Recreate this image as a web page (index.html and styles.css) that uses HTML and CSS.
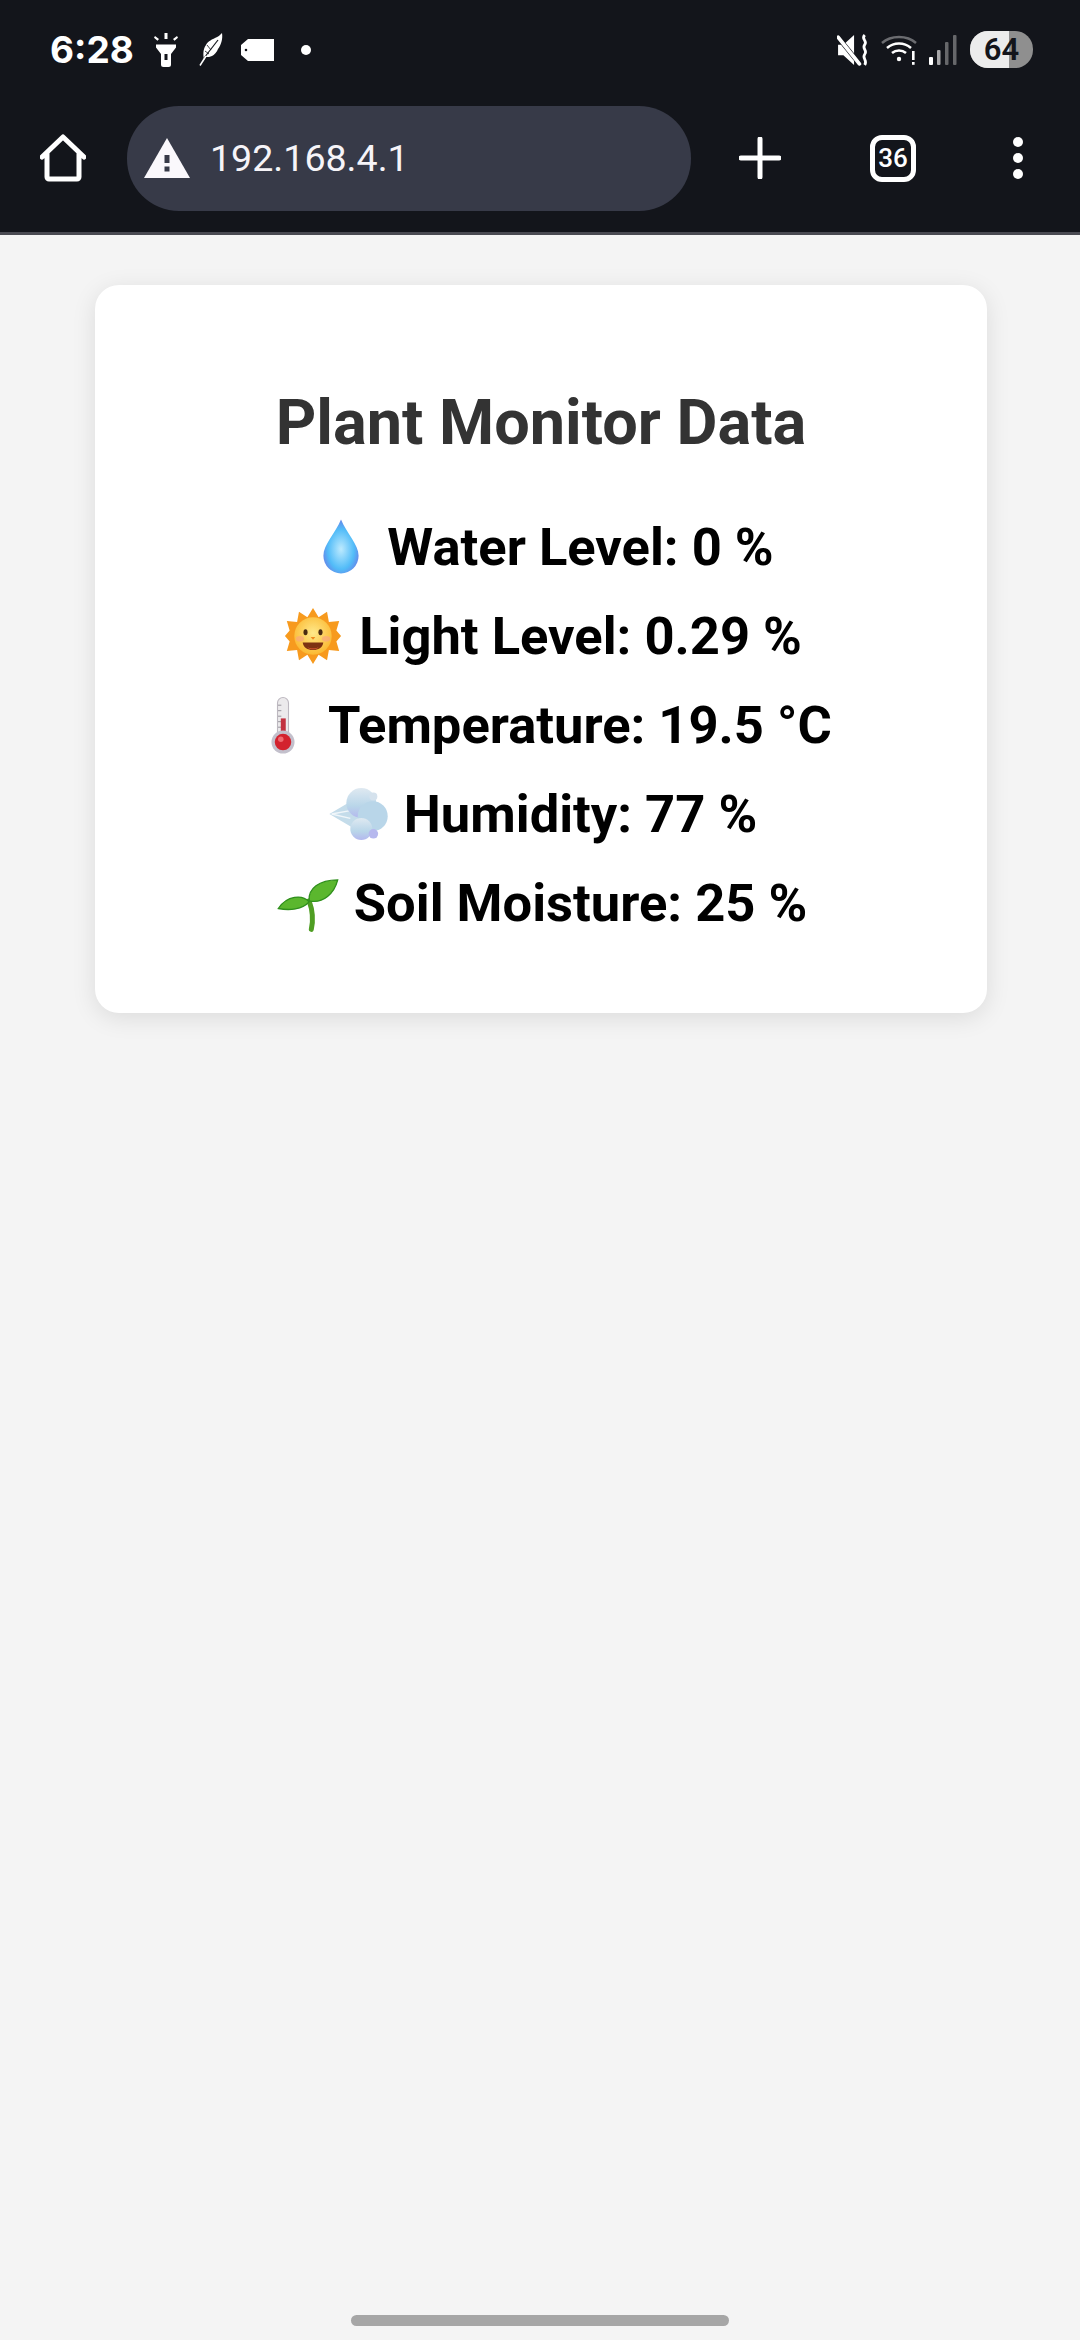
FILE: index.html
```html
<!DOCTYPE html>
<html lang="en">

<head>
  <meta charset="UTF-8">
  <title>Plant Monitor Data</title>
  <link rel="stylesheet" href="styles.css">
</head>

<body>
  <header class="chrome">
    <div class="status-bar">
      <div class="status-left">
        <span class="clock">6:28</span>
        <svg class="st-icon torch" viewBox="0 0 26 34" width="26" height="34">
          <rect x="11.500" y="0" width="3" height="6" fill="#fff" />
          <path d="M2 3l4 3-1.500 1.800-3.500-3zM24 3l-4 3 1.500 1.800 3.500-3z" fill="#fff" />
          <path d="M3 11.500h20v3l-5 6.500v10.500a2.500 2.500 0 0 1-2.500 2.500h-5a2.500 2.500 0 0 1-2.500-2.500v-10.500l-5-6.500z" fill="#fff" />
          <rect x="11.500" y="21" width="3" height="6" fill="#13151b" />
        </svg>
        <svg class="st-icon feather" viewBox="0 0 24 33" width="24" height="33">
          <path d="M23 0c1 6-1 12-4 16-1 3-4 6-6 7-2 1-4 1-6 1l-2 3c-1-6-1-11 2-15 2-4 7-6 9-7 3-1 5-3 7-5z" fill="#fff" />
          <path d="M19 7L5 25" stroke="#13151b" stroke-width="1.200" />
          <path d="M8 12l4 5M6 18l4 3" stroke="#13151b" stroke-width="0.800" />
          <path d="M7 23L1 32.500" stroke="#fff" stroke-width="1.500" />
        </svg>
        <svg class="st-icon tag" viewBox="0 0 33 22" width="33" height="22">
          <path d="M7 0h26v22H7l-7-6V6zM5 9.700a1.300 1.300 0 1 0 0 2.600 1.300 1.300 0 0 0 0-2.600z" fill="#fff" fill-rule="evenodd" />
        </svg>
        <span class="dot"></span>
      </div>
      <div class="status-right">
        <svg class="st-icon mute" viewBox="0 0 30 30" width="32" height="32">
          <path d="M1 10h5l10-9v28L6 20H1z" fill="#fff" />
          <path d="M1 3l20 25" stroke="#13151b" stroke-width="4.500" />
          <path d="M1 3l20 25" stroke="#fff" stroke-width="3.500" stroke-linecap="round" />
          <path d="M26 1c-4 4 3 5 0 9s3 5 0 9 3 5 0 10" fill="none" stroke="#fff" stroke-width="2.600" />
        </svg>
        <svg class="st-icon wifi" viewBox="0 0 36 30" width="36" height="30">
          <path d="M1 8c9-8 25-8 34 0" fill="none" stroke="#6b6c70" stroke-width="2.500" />
          <path d="M6 13c7-6 17-6 24 0" fill="none" stroke="#fff" stroke-width="2.500" />
          <path d="M11 18c4-3.500 10-3.500 14 0" fill="none" stroke="#fff" stroke-width="2.500" />
          <circle cx="18" cy="24" r="2.200" fill="#fff" />
          <rect x="31" y="16" width="2.600" height="9" fill="#fff" />
          <rect x="31" y="27" width="2.600" height="2.800" fill="#fff" />
        </svg>
        <svg class="st-icon signal" viewBox="0 0 28 30" width="28" height="30">
          <rect x="0" y="22" width="4" height="8" rx="1" fill="#fff" />
          <rect x="8" y="15" width="3.500" height="15" rx="1" fill="#a8a8aa" />
          <rect x="16" y="7" width="3.500" height="23" rx="1" fill="#66676a" />
          <rect x="24" y="0" width="3.500" height="30" rx="1" fill="#66676a" />
        </svg>
        <div class="battery"><span class="battery-fill"></span><span class="battery-num">64</span></div>
      </div>
    </div>
    <div class="toolbar">
      <svg class="home" viewBox="0 0 46 48" width="46" height="48">
        <path d="M2 23L23 3l21 20M7 19v24a2 2 0 0 0 2 2h28a2 2 0 0 0 2-2V19" fill="none" stroke="#fff" stroke-width="5" stroke-linecap="round" stroke-linejoin="round" />
      </svg>
      <div class="address">
        <svg viewBox="0 0 46 40" width="46" height="40">
          <path d="M23 0l23 40H0z" fill="#faf8fc" />
          <rect x="20.500" y="17" width="5" height="8" fill="#373a48" />
          <rect x="20.500" y="28.500" width="5" height="5" fill="#373a48" />
        </svg>
        <span class="url">192.168.4.1</span>
      </div>
      <svg class="plus" viewBox="0 0 42 42" width="42" height="42">
        <path d="M21 2v38M2 21h38" stroke="#fff" stroke-width="5" stroke-linecap="round" />
      </svg>
      <div class="tabs">36</div>
      <div class="menu"><span></span><span></span><span></span></div>
    </div>
  </header>

  <main class="page">
    <section class="card">
      <h1>Plant Monitor Data</h1>
      <p><svg class="emoji" viewBox="0 0 60 60">
          <defs>
            <radialGradient id="dropFill" cx="0.5" cy="0.55" r="0.62">
              <stop offset="0" stop-color="#bdeafe" />
              <stop offset="0.6" stop-color="#52bcf8" />
              <stop offset="1" stop-color="#6d6ee2" />
            </radialGradient>
          </defs>
          <path d="M30 5c5 12 16 23 16 33a16 16 0 0 1-32 0c0-10 11-21 16-33z" fill="url(#dropFill)" />
        </svg> Water Level: 0 %</p>
      <p><svg class="emoji" viewBox="0 0 60 60">
          <defs>
            <radialGradient id="sunFill" cx="0.5" cy="0.42" r="0.6">
              <stop offset="0" stop-color="#ffe98a" />
              <stop offset="1" stop-color="#fbb72e" />
            </radialGradient>
          </defs>
          <g transform="translate(4.500 4.500) scale(0.85)">
            <path d="M30 0l6 10 9-6 2 11 11-1-3 10 5 6-5 6 3 10-11-1-2 11-9-6-6 10-6-10-9 6-2-11-11 1 3-10-5-6 5-6-3-10 11 1 2-11 9 6z" fill="#f79a1e" />
            <circle cx="30" cy="30" r="20" fill="url(#sunFill)" />
            <ellipse cx="16" cy="33" rx="4.500" ry="3" fill="#f9a77d" opacity="0.7" />
            <ellipse cx="44" cy="33" rx="4.500" ry="3" fill="#f9a77d" opacity="0.7" />
            <ellipse cx="22" cy="26" rx="2.200" ry="3.200" fill="#4a2c12" />
            <ellipse cx="38" cy="26" rx="2.200" ry="3.200" fill="#4a2c12" />
            <path d="M27.500 31h5l-2.500 3z" fill="#ef8a1f" />
            <path d="M19 37h22c-1 6-5 8-11 8s-10-2-11-8z" fill="#7d3212" />
            <path d="M24 42c3 2 9 2 12 0-3 3-9 3-12 0z" fill="#f0623a" />
          </g>
        </svg> Light Level: 0.29 %</p>
      <p><svg class="emoji" viewBox="0 0 60 60">
          <rect x="25" y="5" width="10" height="41" rx="5" fill="#eceaec" stroke="#bdb8c0" />
          <path d="M25.500 12h3M25.500 17h3M25.500 22h3M25.500 27h3M25.500 32h3" stroke="#8d8a92" stroke-width="0.800" />
          <rect x="28" y="24" width="4.500" height="20" fill="#c23240" />
          <circle cx="30" cy="45.500" r="10.500" fill="#c3c0cc" />
          <circle cx="30" cy="45.500" r="7.500" fill="#d3222e" />
          <circle cx="28" cy="43" r="2.500" fill="#ef6a70" />
        </svg> Temperature: 19.5 °C</p>
      <p><svg class="emoji" viewBox="0 0 60 60">
          <defs>
            <linearGradient id="puffFill" x1="0" y1="0" x2="0" y2="1">
              <stop offset="0" stop-color="#dfe9f1" />
              <stop offset="0.6" stop-color="#b9d6e9" />
              <stop offset="1" stop-color="#b4b8ee" />
            </linearGradient>
          </defs>
          <path d="M4 30l22-13 6 13-6 13z" fill="#c4dcea" />
          <path d="M6 30l17-3M6 30l17 4" stroke="#f0f6fa" stroke-width="1.200" />
          <circle cx="33" cy="20" r="13.600" fill="url(#puffFill)" />
          <circle cx="44" cy="14" r="3.600" fill="#d5e2ed" />
          <circle cx="43.400" cy="32" r="13.600" fill="#b9d6e9" />
          <circle cx="33" cy="43.600" r="10" fill="url(#puffFill)" />
          <circle cx="44" cy="48" r="4.300" fill="#b6b8ee" />
        </svg> Humidity: 77 %</p>
      <p><svg class="emoji" viewBox="0 0 60 60">
          <path d="M31 28c3 8 4 17 2 26" fill="none" stroke="#4f9e23" stroke-width="4.500" stroke-linecap="round" />
          <path d="M31 28c-1-11 9-19 26-19-3 12-13 22-26 19z" fill="#5bb72e" stroke="#2f8f1c" stroke-width="1.200" />
          <path d="M31 29c-6-7-20-6-28 6 10 2 22 1 28-6z" fill="#5bb72e" stroke="#2f8f1c" stroke-width="1.200" />
        </svg> Soil Moisture: 25 %</p>
    </section>
  </main>

  <div class="home-bar"></div>
</body>

</html>
```

FILE: styles.css
```css
* {
  box-sizing: border-box;
}

body {
  margin: 0;
  width: 1080px;
  height: 2340px;
  overflow: hidden;
  background-color: #f4f4f4;
  font-family: Roboto, "Liberation Sans", sans-serif;
  display: flex;
  flex-direction: column;
}

.chrome {
  height: 235px;
  flex-shrink: 0;
  background-color: #13151b;
  border-bottom: 3px solid #4a4a52;
  color: #fff;
}

.status-bar {
  height: 99px;
  padding: 0 47px 0 50px;
  display: flex;
  align-items: center;
  justify-content: space-between;
}

.status-left,
.status-right {
  display: flex;
  align-items: center;
}

.clock {
  font-family: Inter, Roboto, sans-serif;
  font-size: 37px;
  font-weight: 700;
  margin-right: 19px;
}

.torch {
  margin-right: 20px;
}

.feather {
  margin-right: 18px;
}

.tag {
  margin-right: 27px;
}

.dot {
  width: 10px;
  height: 10px;
  border-radius: 50%;
  background-color: #fff;
}

.status-right .st-icon {
  margin-right: 12px;
}

.status-right .signal {
  margin-right: 13px;
}

.battery {
  position: relative;
  width: 63px;
  height: 37px;
  border-radius: 18px;
  overflow: hidden;
  background-color: #8f8f8f;
  display: flex;
  align-items: center;
  justify-content: center;
}

.battery-fill {
  position: absolute;
  left: 0;
  top: 0;
  bottom: 0;
  width: 39px;
  background-color: #ececec;
}

.battery-num {
  position: relative;
  color: #13151b;
  font-family: Roboto, sans-serif;
  font-size: 31px;
  font-weight: 600;
}

.toolbar {
  height: 133px;
  padding-bottom: 15px;
  display: flex;
  align-items: center;
}

.home {
  margin-left: 40px;
  flex-shrink: 0;
}

.address {
  width: 564px;
  height: 105px;
  margin-left: 41px;
  padding-left: 17px;
  border-radius: 52px;
  background-color: #373a48;
  display: flex;
  align-items: center;
}

.url {
  margin-left: 20px;
  font-size: 37.6px;
  color: #f6f4f8;
}

.plus {
  margin-left: 48px;
}

.tabs {
  width: 46px;
  height: 47px;
  margin-left: 89px;
  border: 5px solid #fff;
  border-radius: 12px;
  font-size: 26px;
  font-weight: 500;
  display: flex;
  align-items: center;
  justify-content: center;
}

.menu {
  margin-left: 97px;
  display: flex;
  flex-direction: column;
  gap: 6px;
}

.menu span {
  width: 10px;
  height: 10px;
  border-radius: 50%;
  background-color: #fff;
}

.page {
  flex: 1;
  padding: 50px 93px 0 95px;
}

.card {
  height: 728px;
  padding: 100px 10px 0;
  background-color: #fff;
  border-radius: 24px;
  box-shadow: 0 5px 25px rgba(0, 0, 0, 0.1);
  text-align: center;
}

h1 {
  margin: 0 0 42px;
  color: #333;
  font-size: 63px;
  font-weight: 700;
  line-height: 76px;
}

p {
  margin: 0;
  height: 89px;
  color: #000;
  font-size: 52.5px;
  font-weight: 700;
  line-height: 89px;
}

.emoji {
  width: 66px;
  height: 66px;
  vertical-align: -15px;
}

.home-bar {
  position: absolute;
  left: 351px;
  top: 2315px;
  width: 378px;
  height: 11px;
  border-radius: 6px;
  background-color: #a6a6a6;
}
```
